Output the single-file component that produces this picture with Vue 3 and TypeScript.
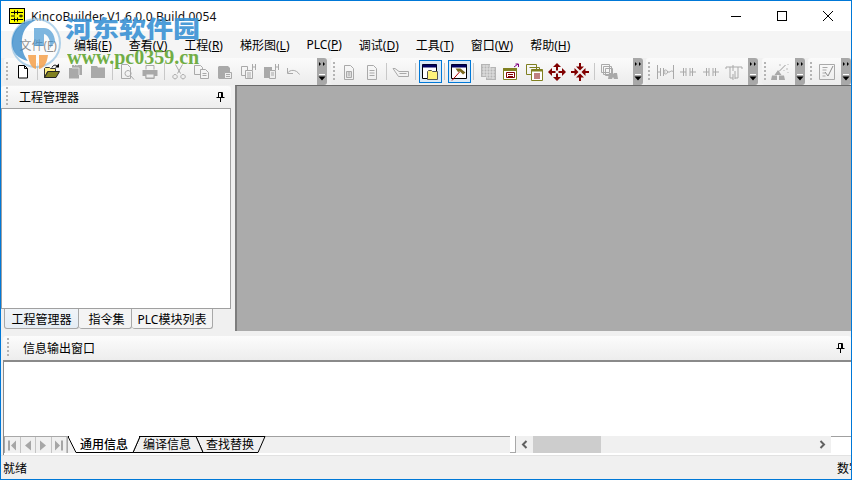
<script setup lang="ts">
type Shape = { d: string; f?: string; s?: string };
type Item = string | null;

const G = '#a9a9a9';
const line = (d: string, s = G): Shape => ({ d, s });
const fill = (d: string, f = G): Shape => ({ d, f });
const box = (d: string, f: string, s: string): Shape => ({ d, f, s });

const menus = [
  ['文件', 'F'], ['编辑', 'E'], ['查看', 'V'], ['工程', 'R'], ['梯形图', 'L'],
  ['PLC', 'P'], ['调试', 'D'], ['工具', 'T'], ['窗口', 'W'], ['帮助', 'H'],
];

const icons: Record<string, Shape[]> = {
  new: [box('M4.5 2.5h6l3 3v9.5h-9zM10.5 2.5v3h3', '#fff', '#000')],
  open: [
    box('M1.5 14.5v-9l1-1h4l1 1h5v3h-8l-3 6', '#ffef80', '#333'),
    box('M1.5 14.5l3.5-6h11.5l-3.5 6z', '#808020', '#222'),
    line('M9 4.5c1-2.5 3.5-3 5-1.5', '#000'),
    fill('M12 4.5h4v-4z', '#000'),
  ],
  saveAll: [fill('M6 2h10v10h-3v3.500H3V5h3z'), line('M6 5h7v7M8.500 2v1M11 2v1', '#ddd')],
  save: [fill('M2 3h6l1 1.500h7V15H2z')],
  preview: [line('M3.500 1.500h6l3 3v11h-9z'), line('M10 7.500a3 3 0 1 0 .1 0zM12 12l4 4.500')],
  print: [line('M5 6.500v-4h8v4'), fill('M1.500 7h15v6h-3v3h-9v-3h-3z'), box('M5 11h8v4H5z', '#eee', G)],
  cut: [line('M5.500 1.500l5 9M12.500 1.500l-5 9M5 11.500a2.200 2.200 0 1 0 .1 0zM13 11.500a2.200 2.200 0 1 0 .1 0z')],
  copy: [line('M1.500 2.500h6l2 2v7h-8z'), box('M7.500 6.500h5l3 3v6h-8z', '#f4f4f4', G), line('M9.500 10.500h4M9.500 12.500h4')],
  paste: [fill('M3 3h9l2 2v6H9v5H3l-1-1V4z'), box('M8.500 9.500h7v6h-7z', '#eee', G), line('M10 11.500h4M10 13.500h4')],
  pasteOne: [line('M2.500 3.500h6v9h-6z'), box('M6.500 7.500h7v8h-7z', '#f4f4f4', G), line('M8 10h4M8 12h4M8 14h4M13.500 1v6M16.500 1v6M13.500 4h3')],
  pasteTwo: [fill('M2 4h8v11H2z'), box('M7.500 7.500h6v8h-6z', '#eee', G), line('M9 10h3M9 12h3M13.500 1v6M16.500 1v6M13.500 4h3')],
  undo: [line('M2.500 5v5.500H8M2.500 10C5 6.500 11 6 14.500 11.500')],
  pageNum: [line('M4.500 2.500h6l3 3v11h-9z'), box('M6.500 8.500h5v6h-5z', '#ddd', G), line('M8 10h2M8 12h2')],
  page: [line('M4.500 2.500h6l3 3v11h-9zM6.500 7.500h5M6.500 10h5M6.500 12.500h5')],
  tag: [line('M1 5.500h2l4 3h9.500v5H6.500zM7.500 10.500h7')],
  windowFolder: [
    box('M1.500 1.500h14v14h-14z', '#fff', '#000'),
    fill('M1.500 1.500h14v3h-14z', '#000060'),
    box('M6.500 8.500l1-1h3l1 1h5v8h-10z', '#fff27a', '#555'),
  ],
  windowHammer: [
    box('M1.500 1.500h15v14h-15z', '#fff', '#000'),
    fill('M1.500 1.500h15v3h-15z', '#000060'),
    line('M9.500 9L2 17.500', '#b00000'),
    fill('M5.500 5.500h5l5 4-2.500 2-3-3-2 .5z', '#7a6a20'),
  ],
  pattern: [
    fill('M2 1h9v3h6v13H7v-3H2z', '#b5b5b5'),
    line('M3 3h8M3 6h13M3 9h13M3 12h13M8 15h8', '#dedede'),
    line('M5 2v11M8 2v13M11 4v11M14 5v11', '#e4e4e4'),
  ],
  tableOut: [
    box('M1.500 5.500h13v11h-13z', '#fff', '#808020'),
    box('M1.500 5.500h13v2h-13z', '#808020', '#808020'),
    box('M4.500 9.500h8v5h-8z', '#fff', '#800000'),
    line('M6 11.500h5M6 13.500h5', '#800000'),
    line('M12 4l4-3M13.500 1h3v3', '#800080'),
  ],
  tableStack: [
    line('M1.500 1.500h10v10h-10zM4.500 4.500h10v10', '#808020'),
    box('M6.500 6.500h11v11h-11z', '#fff', '#808020'),
    fill('M6.500 6.500h11v2h-11z', '#808020'),
    line('M9 11h6M9 13h6M9 15h6', '#800000'),
  ],
  moveOut: [fill(
    'M9 0l4 4h-3v3.500H8V4H5zM9 18l4-4h-3v-3.500H8V14H5zM0 9l4-4v3h3.500v2H4v3zM18 9l-4-4v3h-3.500v2H14v3z',
    '#800000',
  )],
  moveIn: [fill(
    'M9 7.500L5 3.500h3V0h2v3.500h3zM9 10.500l-4 4h3V18h2v-3.500h3zM7.500 9l-4-4v3H0v2h3.500v3zM10.500 9l4-4v3H18v2h-3.500v3z',
    '#800000',
  )],
  binoculars: [
    line('M1.500 1.500h8v8h-8zM3.500 3.500h8v8h-8zM5.500 5.500h7v7h-7z'),
    fill('M9 10h3l1 1 1-1h3l1 6h-4l-1-2-1 2H8z'),
  ],
  coilRung: [line('M1.500 2v14M17.500 2v14M1.500 9h3M4.500 5v8M7.500 5v8M7.500 9h2M9.500 7a2 2 0 1 0 .1 0zM12 9h2a2 2 0 0 1 3.500 0')],
  contactNo: [line('M1 9h6M7 5v8M11 5v8M11 9h6M4.500 5v8M13.500 5v8')],
  contactNc: [line('M1 9h6M7 5v8M11 5v8M11 9h6M4.500 5v8M13.500 5v8')],
  parallel: [line('M1 4h16M1 4v2M17 4v2M5 4v11h3M13 4v11h-3M8 2v6M10 8v8M8 11v6')],
  wand: [
    fill('M7 7l3.500 5h-7zM1 12.500h5v4.500H0zM8 12.500h5l1 4.500H8z'),
    line('M8 8.500l6.500-6.500', '#999'),
    line('M9 1v2M16 5v2M17 1v1M13 7v1M17 9v1', '#bbb'),
  ],
  checkPage: [line('M1.500 1.500h15v15h-15zM4.500 4.500h5M4.500 7h4M4.500 10h3M4.500 13h3'), line('M7 9l3 4 5-10', '#8c8c8c')],
};

const toolbars: { items: Item[]; pad?: boolean }[] = [
  {
    pad: true,
    items: ['new', null, 'open', 'saveAll', 'save', null, 'preview', 'print', null, 'cut', 'copy', 'paste', 'pasteOne', 'pasteTwo', 'undo'],
  },
  {
    pad: true,
    items: ['pageNum', 'page', null, 'tag', null, 'windowFolder', null, 'windowHammer', null, 'pattern', 'tableOut', 'tableStack', 'moveOut', 'moveIn', null, 'binoculars'],
  },
  { items: ['coilRung', 'contactNo', 'contactNc', 'parallel'] },
  { items: ['wand'] },
  { items: ['checkPage'] },
];

const activeIcons = ['windowFolder', 'windowHammer'];
const leftTabs = ['工程管理器', '指令集', 'PLC模块列表'];
const sheets = ['通用信息', '编译信息', '查找替换'];
</script>

<template>
  <div class="window">
    <header class="titlebar">
      <svg class="app-icon" width="16" height="16" viewBox="0 0 16 16">
        <rect x="0.500" y="0.500" width="15" height="15" fill="#ffff00" stroke="#000" />
        <path d="M2 4.500h12M2 11.500h12M5.500 2.500v4M8.500 2.500v4M5.500 9.500v4M8.500 9.500v4M2 8h4M10 8h4M12 6.500v3" fill="none" stroke="#000" />
      </svg>
      <span class="title-text">KincoBuilder V1.6.0.0 Build 0054</span>
      <div class="controls">
        <svg width="46" height="30" viewBox="0 0 46 30"><path d="M18 15.500h10" stroke="#000" fill="none" /></svg>
        <svg width="46" height="30" viewBox="0 0 46 30"><rect x="18.500" y="10.500" width="9" height="9" stroke="#000" fill="none" /></svg>
        <svg width="46" height="30" viewBox="0 0 46 30"><path d="M18 10l10 10M28 10L18 20" stroke="#000" fill="none" /></svg>
      </div>
    </header>

    <nav class="menubar">
      <span v-for="m in menus" :key="m[1]" class="menu-item">{{ m[0] }}(<u>{{ m[1] }}</u>)</span>
    </nav>

    <div class="toolbars">
      <div v-for="(bar, i) in toolbars" :key="i" class="bar">
        <i class="grip"></i>
        <template v-for="(item, j) in bar.items" :key="j">
          <i v-if="item === null" class="sep"></i>
          <span v-else class="tool" :class="{ active: activeIcons.includes(item) }">
            <svg width="18" height="18" viewBox="0 0 18 18">
              <path
                v-for="(s, k) in icons[item]"
                :key="k"
                :d="s.d"
                :fill="s.f || 'none'"
                :stroke="s.s || 'none'"
              />
            </svg>
          </span>
        </template>
        <span class="chevron" :class="{ wide: bar.pad }">
          <svg width="10" height="27" viewBox="0 0 10 27">
            <path d="M2 4l2 2-2 2zM6 4l2 2-2 2z" fill="#000" />
            <path d="M2 16.500h6" stroke="#fff" />
            <path d="M1.500 18.500h7l-3.500 4z" fill="#000" />
          </svg>
        </span>
      </div>
    </div>

    <div class="dock">
      <aside class="side">
        <div class="pane-head">
          <i class="grip"></i>
          <span class="pane-title">工程管理器</span>
          <svg class="pin" width="9" height="10" viewBox="0 0 9 10">
            <path d="M2.500.5h4v5h-4zM5.500.5v5M.5 5.500h8M4.500 6v4" fill="none" stroke="#000" />
          </svg>
        </div>
        <div class="tree"></div>
        <div class="side-tabs">
          <span v-for="(t, i) in leftTabs" :key="t" class="side-tab" :class="`side-tab-${i}`">{{ t }}</span>
        </div>
      </aside>
      <main class="workspace"></main>
    </div>

    <div class="split"></div>

    <section class="output">
      <div class="pane-head output-head">
        <i class="grip"></i>
        <span class="pane-title">信息输出窗口</span>
        <svg class="pin" width="9" height="10" viewBox="0 0 9 10">
          <path d="M2.500.5h4v5h-4zM5.500.5v5M.5 5.500h8M4.500 6v4" fill="none" stroke="#000" />
        </svg>
      </div>
      <div class="output-box">
        <div class="output-text"></div>
        <div class="tabrow">
          <div class="tabnav">
            <span class="nav-btn"><svg width="10" height="11" viewBox="0 0 10 11"><path d="M1 .5h2v10H1zM9 .5v10L4 5.500z" fill="#a6a6a6" /></svg></span>
            <span class="nav-btn"><svg width="10" height="11" viewBox="0 0 10 11"><path d="M8 .5v10L2 5.500z" fill="#a6a6a6" /></svg></span>
            <span class="nav-btn"><svg width="10" height="11" viewBox="0 0 10 11"><path d="M2 .5v10l6-5z" fill="#a6a6a6" /></svg></span>
            <span class="nav-btn"><svg width="10" height="11" viewBox="0 0 10 11"><path d="M1 .5v10l5-5zM7 .5h2v10H7z" fill="#a6a6a6" /></svg></span>
          </div>
          <div class="sheet-tabs">
            <svg class="sheet-lines" width="442" height="17" viewBox="0 0 442 17">
              <path d="M0 .5h442" stroke="#a0a0a0" fill="none" />
              <path d="M128 .5l7 16h55l7-16z" fill="#f0f0f0" stroke="#000" />
              <path d="M72 .5l-7 16h70l-7-16z" fill="#f0f0f0" stroke="#000" />
              <path d="M0 .5l8 16h57l7-16z" fill="#fff" stroke="#000" />
              <path d="M1 .5h70" stroke="#fff" fill="none" />
            </svg>
            <span v-for="(s, i) in sheets" :key="s" class="sheet" :class="`sheet-${i}`">{{ s }}</span>
          </div>
          <i class="tab-grip"></i>
          <div class="hscroll">
            <svg width="17" height="17" viewBox="0 0 17 17"><path d="M10.500 5L7 8.500l3.500 3.500" fill="none" stroke="#606060" stroke-width="2" /></svg>
            <div class="scroll-track"><div class="scroll-thumb"></div></div>
            <svg width="17" height="17" viewBox="0 0 17 17"><path d="M6.500 5L10 8.500 6.500 12" fill="none" stroke="#606060" stroke-width="2" /></svg>
          </div>
          <i class="corner"></i>
        </div>
      </div>
    </section>

    <footer class="status">
      <span class="status-main">就绪</span>
      <span class="status-num">数字</span>
    </footer>

    <div class="watermark" aria-hidden="true">
      <svg class="wm-logo" width="56" height="52" viewBox="0 0 56 52">
        <circle cx="28" cy="25" r="24" fill="#fff" fill-opacity=".55" stroke="#7fb6de" stroke-width="2" stroke-opacity=".6" />
        <path d="M4 25C4 12 14 2 28 2c-9 4-15 12-14 24 0 8 3 13 6 17C10 41 4 34 4 25z" fill="#2f86c8" opacity=".75" />
        <path d="M26 10h10c6 0 11 6 11 14l-5 6c1-8-2-13-6-14v12H26z" fill="#3a90d0" opacity=".65" />
        <path d="M20 37h8v14c-4-1-7-5-8-14zM31 37h9c-1 8-4 13-9 14z" fill="#f5a04a" opacity=".85" />
      </svg>
      <span class="wm-cn">河东软件园</span>
      <span class="wm-url">www.pc0359.cn</span>
    </div>
  </div>
</template>

<style scoped>
.window {
  position: relative;
  display: flex;
  flex-direction: column;
  width: 852px;
  height: 480px;
  box-sizing: border-box;
  overflow: hidden;
  border: 1px solid #0078d7;
  background: #f0f0f0;
  color: #000;
  font: 12px "Noto Sans", "Noto Sans CJK SC", sans-serif;
}
.titlebar {
  display: flex;
  align-items: center;
  height: 30px;
  flex: none;
  background: #fff;
}
.app-icon {
  margin: 0 6px 0 8px;
}
.title-text {
  font-size: 12px;
  letter-spacing: 0.13px;
  color: #111;
}
.controls {
  display: flex;
  margin-left: auto;
}
.menubar {
  display: flex;
  align-items: center;
  height: 27px;
  flex: none;
  padding-left: 10px;
  background: #f5f5f5;
}
.menu-item {
  padding: 0 8.500px;
  white-space: nowrap;
}
.toolbars {
  display: flex;
  height: 27px;
  flex: none;
  padding-left: 3px;
  gap: 3.500px;
  background: #f0f0f0;
}
.bar {
  display: flex;
  align-items: center;
  border-radius: 3px;
  background: linear-gradient(#fbfbfb, #ececec);
}
.grip {
  display: block;
  width: 2px;
  height: 20px;
  margin: 0 3px 0 2px;
  flex: none;
  background: repeating-linear-gradient(#b4b4b4 0 2px, transparent 2px 4px);
}
.tool {
  display: flex;
  align-items: center;
  justify-content: center;
  width: 23px;
  height: 23px;
  box-sizing: border-box;
}
.tool.active {
  border: 1px solid #0078d7;
  background: #dbe9f5;
}
.sep {
  display: block;
  width: 1px;
  height: 17px;
  margin: 0 2.500px;
  background: #c8c8c8;
}
.chevron {
  display: block;
  width: 10px;
  height: 27px;
  margin-left: 3px;
  border-radius: 0 3px 3px 0;
  background: #a8a8a8;
}
.chevron.wide {
  margin-left: 12px;
}
.dock {
  display: flex;
  height: 246px;
  flex: none;
}
.side {
  display: flex;
  flex-direction: column;
  width: 230px;
  flex: none;
  padding-top: 1px;
  box-sizing: border-box;
}
.pane-head {
  display: flex;
  align-items: center;
  height: 22px;
  flex: none;
  padding-left: 3px;
  padding-bottom: 1px;
  box-sizing: border-box;
  border-radius: 3px 3px 0 0;
  background: linear-gradient(#fcfcfc, #ededed);
}
.pane-title {
  margin-left: 8px;
}
.pin {
  margin-left: auto;
  margin-right: 6px;
}
.tree {
  flex: 1;
  border: 1px solid #a0a0a0;
  background: #fff;
}
.side-tabs {
  display: flex;
  height: 20px;
  flex: none;
  margin-bottom: 2px;
  padding-left: 3px;
}
.side-tab {
  display: flex;
  align-items: center;
  justify-content: center;
  box-sizing: border-box;
  border: 1px solid #a8a8a8;
  border-top: 0;
  border-left: 0;
  border-radius: 0 0 3px 3px;
  background: #f4f4f4;
}
.side-tab-0 {
  width: 75px;
  border-left: 1px solid #a8a8a8;
  background: linear-gradient(#f0f4f8, #e6edf4);
}
.side-tab-1 {
  width: 53px;
  padding-left: 3px;
}
.side-tab-2 {
  width: 81px;
}
.workspace {
  flex: 1;
  margin-left: 4px;
  border-top: 1px solid #696969;
  border-left: 2px solid #7d7d7d;
  background: #ababab;
}
.split {
  height: 5px;
  flex: none;
}
.output {
  display: flex;
  flex-direction: column;
  height: 119px;
  flex: none;
  padding-left: 2px;
}
.output-head {
  height: 24px;
  padding-left: 2px;
  padding-bottom: 0;
}
.output-head .pane-title {
  margin-left: 11px;
}
.output-box {
  display: flex;
  flex-direction: column;
  flex: 1;
  border-top: 2px solid #8a8a8a;
  border-left: 1px solid #8a8a8a;
  background: #fff;
}
.output-text {
  flex: 1;
}
.tabrow {
  display: flex;
  height: 17px;
  flex: none;
  margin-bottom: 2px;
  background: #f0f0f0;
}
.tabnav {
  display: flex;
  width: 64px;
  flex: none;
  box-sizing: border-box;
  border: 1px solid #a8a8a8;
  border-bottom: 0;
}
.nav-btn {
  display: flex;
  flex: 1;
  align-items: center;
  justify-content: center;
  border-right: 1px solid #c4c4c4;
}
.sheet-tabs {
  position: relative;
  display: flex;
  width: 442px;
  flex: none;
}
.sheet-lines {
  position: absolute;
  left: 0;
  top: 0;
}
.sheet {
  position: relative;
  display: flex;
  align-items: center;
  justify-content: center;
  height: 17px;
  line-height: 17px;
}
.sheet-0 {
  width: 72px;
  font-weight: 500;
}
.sheet-1 {
  width: 54px;
}
.sheet-2 {
  width: 72px;
}
.tab-grip {
  display: block;
  width: 6px;
  flex: none;
  box-sizing: border-box;
  border-right: 1px solid #a8a8a8;
  border-bottom: 1px solid #a8a8a8;
  background: #fff;
}
.hscroll {
  display: flex;
  width: 315px;
  flex: none;
}
.scroll-track {
  flex: 1;
}
.scroll-thumb {
  width: 68px;
  height: 17px;
  background: #cdcdcd;
}
.corner {
  display: block;
  flex: 1;
  border-top: 1px solid #a0a0a0;
  background: #fff;
}
.status {
  display: flex;
  align-items: center;
  flex: 1;
  justify-content: space-between;
  padding-left: 2px;
  padding-top: 1px;
  border-top: 1px solid #e2e2e2;
  background: #f0f0f0;
}
.status-num {
  width: 14px;
  overflow: hidden;
  white-space: nowrap;
}
.watermark {
  position: absolute;
  left: 7px;
  top: 15px;
  width: 200px;
  height: 56px;
  pointer-events: none;
}
.wm-logo {
  position: absolute;
  left: 0;
  top: 2px;
}
.wm-cn {
  position: absolute;
  left: 57px;
  top: 0;
  font: 900 27px/28px "Noto Sans CJK SC", sans-serif;
  color: #3a92d4;
  opacity: 0.9;
  white-space: nowrap;
  transform: scaleY(0.85);
  transform-origin: left top;
}
.wm-url {
  position: absolute;
  left: 59px;
  top: 31px;
  font: 700 20px/20px "Liberation Serif", serif;
  color: #6aaa3c;
  opacity: 0.95;
  white-space: nowrap;
}
</style>
